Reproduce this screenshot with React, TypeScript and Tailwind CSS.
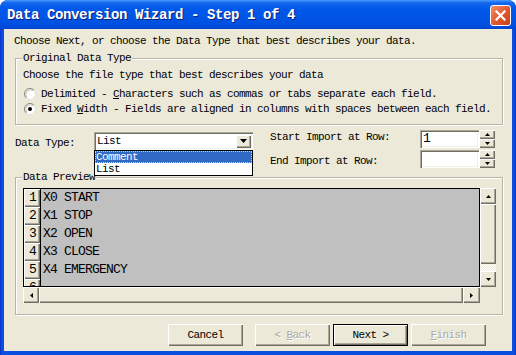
import React from 'react';

const font = "font-['Liberation_Mono','DejaVu_Sans_Mono',monospace]";
const txt = 'text-[11px] leading-[12px] tracking-[-0.6px]';
const raised =
  'bg-[#ece9d8] shadow-[inset_1px_1px_0_#fff,inset_-1px_-1px_0_#716f64,inset_-2px_-2px_0_#aca899]';
const sunken =
  'bg-white shadow-[inset_1px_1px_0_#aca899,inset_2px_2px_0_#716f64,inset_-1px_-1px_0_#fff,inset_-2px_-2px_0_#f1efe2]';

function Tri({ dir, w = 7, h = 4 }: { dir: 'up' | 'down' | 'left' | 'right'; w?: number; h?: number }) {
  const pts =
    dir === 'down'
      ? `0,0 ${w},0 ${w / 2},${h}`
      : dir === 'up'
      ? `0,${h} ${w},${h} ${w / 2},0`
      : dir === 'left'
      ? `${w},0 ${w},${h} 0,${h / 2}`
      : `0,0 0,${h} ${w},${h / 2}`;
  return (
    <svg width={w} height={h} viewBox={`0 0 ${w} ${h}`}>
      <polygon points={pts} fill="#000" />
    </svg>
  );
}

function Radio({ checked }: { checked?: boolean }) {
  return (
    <svg width="12" height="12" viewBox="0 0 12 12" className="shrink-0">
      <circle cx="6" cy="6" r="5.5" fill="#fff" stroke="#e2e0d6" />
      <path d="M2.1 9.9 A5.5 5.5 0 0 1 9.9 2.1" stroke="#8a887c" fill="none" />
      <path d="M2.9 9.1 A4.4 4.4 0 0 1 9.1 2.9" stroke="#c4c1b4" fill="none" />
      {checked && <circle cx="6" cy="6" r="2" fill="#000" />}
    </svg>
  );
}

function Group({ title, className, children }: { title: string; className?: string; children: React.ReactNode }) {
  return (
    <div
      className={`relative border border-[#b7b5a8] shadow-[1px_1px_0_#fff,inset_1px_1px_0_#fff] ${className ?? ''}`}
    >
      <span className={`absolute -top-[7px] left-[6px] bg-[#ece9d8] px-[1px] ${txt}`}>{title}</span>
      {children}
    </div>
  );
}

function Btn({ children, def, disabled }: { children: React.ReactNode; def?: boolean; disabled?: boolean }) {
  return (
    <div className={`w-[75px] h-[22px] ${def ? 'border border-black' : ''}`}>
      <div
        className={`w-full h-full flex items-center justify-center whitespace-pre ${raised} ${txt} ${
          disabled ? 'text-[#aca899] [text-shadow:1px_1px_0_#fff]' : 'text-black'
        }`}
      >
        {children}
      </div>
    </div>
  );
}

function Spinner() {
  return (
    <div className="w-[16px] h-[18px] flex flex-col">
      <div className={`h-[9px] flex items-center justify-center ${raised}`}>
        <Tri dir="up" w={5} h={3} />
      </div>
      <div className={`h-[9px] flex items-center justify-center ${raised}`}>
        <Tri dir="down" w={5} h={3} />
      </div>
    </div>
  );
}

const rows = ['X0 START', 'X1 STOP', 'X2 OPEN', 'X3 CLOSE', 'X4 EMERGENCY', ''];

export default function App() {
  return (
    <div className={`w-[516px] h-[355px] bg-white ${font}`}>
      <div className="w-[516px] h-[355px] flex flex-col rounded-t-[8px] overflow-hidden bg-[linear-gradient(to_right,#0831c8,#0a4fe0_2px,#0a4fe0_calc(100%-2px),#0831c8)]">
        {/* title bar */}
        <div className="h-[29px] shrink-0 flex justify-between bg-[linear-gradient(to_bottom,#4a9cf8_0%,#1466ee_10%,#0058ea_30%,#0055e6_60%,#004fe0_85%,#0044d2_100%)]">
          <div className="pl-[7px] flex items-center text-white font-bold text-[14px] leading-[14px] tracking-[-0.4px] [text-shadow:1px_1px_0_#0a1f78]">
            Data Conversion Wizard - Step 1 of 4
          </div>
          <div className="mt-[5px] mr-[5px] w-[21px] h-[21px] rounded-[3px] border border-white bg-[linear-gradient(135deg,#f0906c,#e0552c_55%,#c8401c)] flex items-center justify-center">
            <svg width="11" height="11" viewBox="0 0 11 11">
              <path d="M1.5 1.5 L9.5 9.5 M9.5 1.5 L1.5 9.5" stroke="#fff" strokeWidth="2.2" strokeLinecap="square" />
            </svg>
          </div>
        </div>

        {/* client area */}
        <div className={`mx-[4px] h-[322px] bg-[#ece9d8] flex flex-col px-[11px] pt-[6px] text-black ${txt}`}>
          <div className="-ml-[1px] h-[12px]">Choose Next, or choose the Data Type that best describes your data.</div>

          <Group title="Original Data Type" className="mt-[11px] w-[488px] pt-[10px] pl-[7px] pb-[8px]">
            <div className="h-[12px]">Choose the file type that best describes your data</div>
            <div className="mt-[5px] h-[15px] flex items-center">
              <div className="ml-[1px]">
                <Radio />
              </div>
              <span className="ml-[5px]">
                Delimited - <span className="underline underline-offset-[1px]">C</span>haracters such as commas or tabs
                separate each field.
              </span>
            </div>
            <div className="h-[15px] flex items-center">
              <div className="ml-[1px]">
                <Radio checked />
              </div>
              <span className="ml-[5px]">
                Fixed <span className="underline underline-offset-[1px]">W</span>idth - Fields are aligned in columns
                with spaces between each field.
              </span>
            </div>
          </Group>

          <div className="mt-[5px] h-[38px] flex">
            <div className="w-[79px] mt-[7px] h-[12px]">Data Type:</div>
            <div className="relative mt-[2px] w-[159px] h-[18px]">
              <div className={`w-full h-full flex items-center pl-[3px] pr-[2px] ${sunken}`}>
                <span className="flex-1">List</span>
                <div className={`w-[15px] h-[13px] flex items-center justify-center ${raised}`}>
                  <Tri dir="down" />
                </div>
              </div>
              <div className="absolute top-full left-0 w-[159px] h-[26px] border border-black bg-white z-10">
                <div className="h-[12px] pl-[1px] bg-[#316ac5] text-white outline outline-1 -outline-offset-1 outline-dotted outline-[#e8d898]">
                  Comment
                </div>
                <div className="h-[12px] pl-[1px]">List</div>
              </div>
            </div>
            <div className="ml-[17px] flex flex-col">
              <div className="flex h-[18px]">
                <div className="w-[150px] mt-[1px]">Start Import at Row:</div>
                <div className={`w-[59px] h-[18px] pl-[3px] text-[13px] leading-[18px] ${sunken}`}>1</div>
                <Spinner />
              </div>
              <div className="flex h-[18px] mt-[2px]">
                <div className="w-[150px] mt-[5px]">End Import at Row:</div>
                <div className={`w-[59px] h-[18px] ${sunken}`} />
                <Spinner />
              </div>
            </div>
          </div>

          <Group title="Data Preview" className="mt-[9px] w-[488px] pt-[10px] pl-[7px] pb-[11px]">
            <div className="flex flex-col w-[473px]">
              <div className="flex">
                <div className="w-[457px] h-[99px] border border-black bg-[#c0c0c0] overflow-hidden text-[13px] leading-[18px] tracking-[-0.8px]">
                  {rows.map((r, i) => (
                    <div key={i} className="flex h-[18px]">
                      <div
                        className={`w-[17px] h-[18px] shrink-0 border-r border-black text-center pl-[1px] ${raised}`}
                      >
                        {i + 1}
                      </div>
                      <div className="pl-[2px] whitespace-pre">{r}</div>
                    </div>
                  ))}
                </div>
                <div className="w-[16px] h-[99px] flex flex-col">
                  <div className={`h-[16px] flex items-center justify-center ${raised}`}>
                    <Tri dir="up" w={5} h={3} />
                  </div>
                  <div className={`h-[60px] ${raised}`} />
                  <div className="flex-1 bg-[repeating-conic-gradient(#fff_0_25%,#ece9d8_0_50%)] bg-[length:2px_2px]" />
                  <div className={`h-[16px] flex items-center justify-center ${raised}`}>
                    <Tri dir="down" w={5} h={3} />
                  </div>
                </div>
              </div>
              <div className="flex h-[16px]">
                <div className="w-[457px] flex">
                  <div className={`w-[16px] flex items-center justify-center ${raised}`}>
                    <Tri dir="left" w={3} h={5} />
                  </div>
                  <div className={`flex-1 ${raised}`} />
                  <div className={`w-[17px] flex items-center justify-center ${raised}`}>
                    <Tri dir="right" w={3} h={5} />
                  </div>
                </div>
                <div className="w-[16px] bg-[#ece9d8]" />
              </div>
            </div>
          </Group>

          <div className="mt-[9px] flex justify-end pr-[15px]">
            <Btn>Cancel</Btn>
            <div className="ml-[12px]">
              <Btn disabled>
                {'< '}
                <span className="underline underline-offset-[1px]">B</span>
                {'ack'}
              </Btn>
            </div>
            <div className="ml-[3px]">
              <Btn def>{'Next >'}</Btn>
            </div>
            <div className="ml-[3px]">
              <Btn disabled>
                <span className="underline underline-offset-[1px]">F</span>
                {'inish'}
              </Btn>
            </div>
          </div>
        </div>
      </div>
    </div>
  );
}
